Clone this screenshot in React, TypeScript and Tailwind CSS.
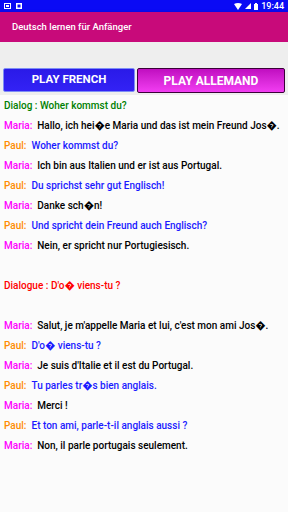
import React from "react";

type Line = { who: "Maria" | "Paul"; text: string };

const german: Line[] = [
  { who: "Maria", text: "Hallo, ich hei\uFFFDe Maria und das ist mein Freund Jos\uFFFD." },
  { who: "Paul", text: "Woher kommst du?" },
  { who: "Maria", text: "Ich bin aus Italien und er ist aus Portugal." },
  { who: "Paul", text: "Du sprichst sehr gut Englisch!" },
  { who: "Maria", text: "Danke sch\uFFFDn!" },
  { who: "Paul", text: "Und spricht dein Freund auch Englisch?" },
  { who: "Maria", text: "Nein, er spricht nur Portugiesisch." },
];

const french: Line[] = [
  { who: "Maria", text: "Salut, je m'appelle Maria et lui, c'est mon ami Jos\uFFFD." },
  { who: "Paul", text: "D'o\uFFFD viens-tu ?" },
  { who: "Maria", text: "Je suis d'Italie et il est du Portugal." },
  { who: "Paul", text: "Tu parles tr\uFFFDs bien anglais." },
  { who: "Maria", text: "Merci !" },
  { who: "Paul", text: "Et ton ami, parle-t-il anglais aussi ?" },
  { who: "Maria", text: "Non, il parle portugais seulement." },
];

function DialogLine({ line }: { line: Line }) {
  const maria = line.who === "Maria";
  return (
    <div className="flex h-[20px] items-center whitespace-nowrap">
      <span className={maria ? "text-[#ff00ff]" : "text-[#ff8c00]"}>{line.who}:</span>
      <span className={maria ? "ml-[5px] text-black" : "ml-[5px] text-[#1a1aff]"}>{line.text}</span>
    </div>
  );
}

function StatusBar() {
  return (
    <div className="flex h-[12px] items-center justify-between bg-[#0a0af5] px-[4px] text-white">
      <div className="flex items-center gap-[5px]">
        <svg width="7" height="6" viewBox="0 0 7 6">
          <rect x="0.5" y="0.5" width="6" height="5" fill="none" stroke="white" />
          <rect x="2" y="2" width="3" height="2" fill="white" />
        </svg>
        <svg width="6" height="6" viewBox="0 0 6 6">
          <rect x="0" y="0" width="6" height="6" fill="white" />
          <rect x="1.5" y="1.5" width="3" height="3" fill="#0a0af5" />
        </svg>
      </div>
      <div className="flex items-center gap-[3px]">
        <svg width="8" height="7" viewBox="0 0 8 7">
          <path d="M0 1 Q4 -1 8 1 L4 7 Z" fill="white" />
        </svg>
        <svg width="6" height="6" viewBox="0 0 6 6">
          <path d="M6 0 L6 6 L0 6 Z" fill="white" />
        </svg>
        <svg width="4" height="7" viewBox="0 0 4 7">
          <rect x="1" y="0" width="2" height="1" fill="white" />
          <rect x="0" y="1" width="4" height="6" fill="white" />
        </svg>
        <span className="text-[9px] font-medium leading-none">19:44</span>
      </div>
    </div>
  );
}

export default function App() {
  return (
    <div className="flex h-[512px] w-[288px] flex-col overflow-hidden bg-[#fbfbfb] font-['Roboto',sans-serif]">
      <StatusBar />
      <div className="flex h-[30px] items-center bg-[#c80a7a] pl-[12px] shadow-[0_1px_3px_rgba(0,0,0,0.35)]">
        <span className="text-[9.5px] font-medium text-white">Deutsch lernen für Anfänger</span>
      </div>
      <div className="flex gap-[2px] bg-[#eeeeee] px-[3px] pt-[26px] pb-[2px]">
        <button className="flex h-[24px] w-[132px] items-center justify-center rounded-[2px] border border-[#7d8df5] bg-gradient-to-b from-[#2a1ae8] to-[#3322f5] text-[11.5px] font-bold text-white">
          PLAY FRENCH
        </button>
        <button className="flex h-[25px] flex-1 items-center justify-center rounded-[2px] border border-[#3a0038] bg-gradient-to-b from-[#c00cc0] to-[#f23cf2] text-[12px] font-bold text-white">
          PLAY ALLEMAND
        </button>
      </div>
      <div className="flex flex-col px-[4px] text-[10px] font-medium">
        <div className="flex h-[20px] items-center text-[#008000]">Dialog : Woher kommst du?</div>
        {german.map((l, i) => (
          <DialogLine key={i} line={l} />
        ))}
        <div className="h-[20px]" />
        <div className="flex h-[20px] items-center text-[#ff0000]">Dialogue : D'o{"\uFFFD"} viens-tu ?</div>
        <div className="h-[20px]" />
        {french.map((l, i) => (
          <DialogLine key={i} line={l} />
        ))}
      </div>
    </div>
  );
}
